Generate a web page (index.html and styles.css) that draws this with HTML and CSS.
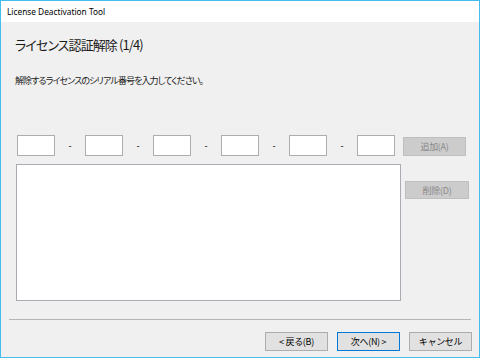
FILE: index.html
```html
<!DOCTYPE html>
<html lang="ja">

<head>
    <meta charset="UTF-8">
    <meta name="viewport" content="width=device-width, initial-scale=1.0">
    <title>License Deactivation Tool</title>
    <link rel="stylesheet" href="styles.css">
</head>

<body>
    <div class="window">
        <div class="titlebar">License Deactivation Tool</div>
        <div class="content">
            <h1 class="step-title">ライセンス認証解除 (1/4)</h1>
            <p class="hint">解除するライセンスのシリアル番号を入力してください。</p>

            <div class="serial-row">
                <div class="serial-fields">
                    <input type="text" class="serial" />
                    <span class="dash">-</span>
                    <input type="text" class="serial" />
                    <span class="dash">-</span>
                    <input type="text" class="serial" />
                    <span class="dash">-</span>
                    <input type="text" class="serial" />
                    <span class="dash">-</span>
                    <input type="text" class="serial" />
                    <span class="dash">-</span>
                    <input type="text" class="serial" />
                </div>
                <button class="btn btn-add" disabled>追加(A)</button>
            </div>

            <div class="list-row">
                <div class="serial-list"></div>
                <button class="btn btn-remove" disabled>削除(D)</button>
            </div>

            <div class="separator"></div>

            <div class="nav-buttons">
                <button class="btn btn-nav">&lt; 戻る(B)</button>
                <button class="btn btn-nav focused">次へ(N) &gt;</button>
                <button class="btn btn-nav">キャンセル</button>
            </div>
        </div>
    </div>
</body>

</html>
```

FILE: styles.css
```css
* {
    margin: 0;
    padding: 0;
    box-sizing: border-box;
}

body {
    background-color: #f0f0f0;
    font-family: "Noto Sans CJK JP", "Noto Sans", sans-serif;
    font-feature-settings: "palt";
}

.window {
    width: 480px;
    height: 358px;
    border: 1px solid #41bdee;
    display: flex;
    flex-direction: column;
}

.titlebar {
    height: 21px;
    line-height: 21px;
    padding-left: 6px;
    background-color: #fff;
    font-family: "Noto Sans", sans-serif;
    font-size: 8.3px;
    color: #000;
}

.content {
    flex: 1;
    background-color: #f0f0f0;
    padding: 13px 7px 0 14px;
}

.step-title {
    font-size: 13px;
    font-weight: normal;
    letter-spacing: -0.9px;
    line-height: 20px;
    color: #1a1a1a;
}

.hint {
    margin-top: 18px;
    font-size: 9px;
    letter-spacing: -0.9px;
    line-height: 16px;
    color: #1a1a1a;
}

.serial-row {
    margin-top: 46px;
    display: flex;
    align-items: flex-start;
}

.serial-fields {
    margin-left: 2px;
    display: flex;
    align-items: center;
}

.serial {
    width: 38px;
    height: 21px;
    border: 1px solid #adadad;
    background-color: #fff;
    outline: none;
}

.dash {
    width: 30px;
    text-align: center;
    font-size: 9px;
    line-height: 21px;
    color: #000;
}

.btn {
    height: 19px;
    border: 1px solid #adadad;
    background-color: #e1e1e1;
    font-family: "Noto Sans CJK JP", sans-serif;
    font-size: 9px;
    letter-spacing: -0.3px;
    color: #000;
}

.btn:disabled {
    background-color: #cccccc;
    border-color: #bfbfbf;
    color: #8a8a8a;
}

.btn-add {
    margin-left: 8px;
    margin-top: 2px;
    width: 63px;
}

.list-row {
    margin-top: 8px;
    display: flex;
    align-items: flex-start;
}

.serial-list {
    margin-left: 1px;
    width: 385px;
    height: 137px;
    border: 1px solid #a9adb3;
    background-color: #fff;
}

.btn-remove {
    margin-left: 4px;
    margin-top: 17px;
    width: 64px;
    height: 18px;
}

.separator {
    margin-top: 18px;
    margin-left: -6px;
    width: 462px;
    border-top: 1px solid #b5b5b5;
}

.nav-buttons {
    margin-top: 12px;
    display: flex;
    justify-content: flex-end;
    gap: 9px;
}

.btn-nav {
    width: 63px;
}

.btn-nav.focused {
    border-color: #0078d7;
}
```
